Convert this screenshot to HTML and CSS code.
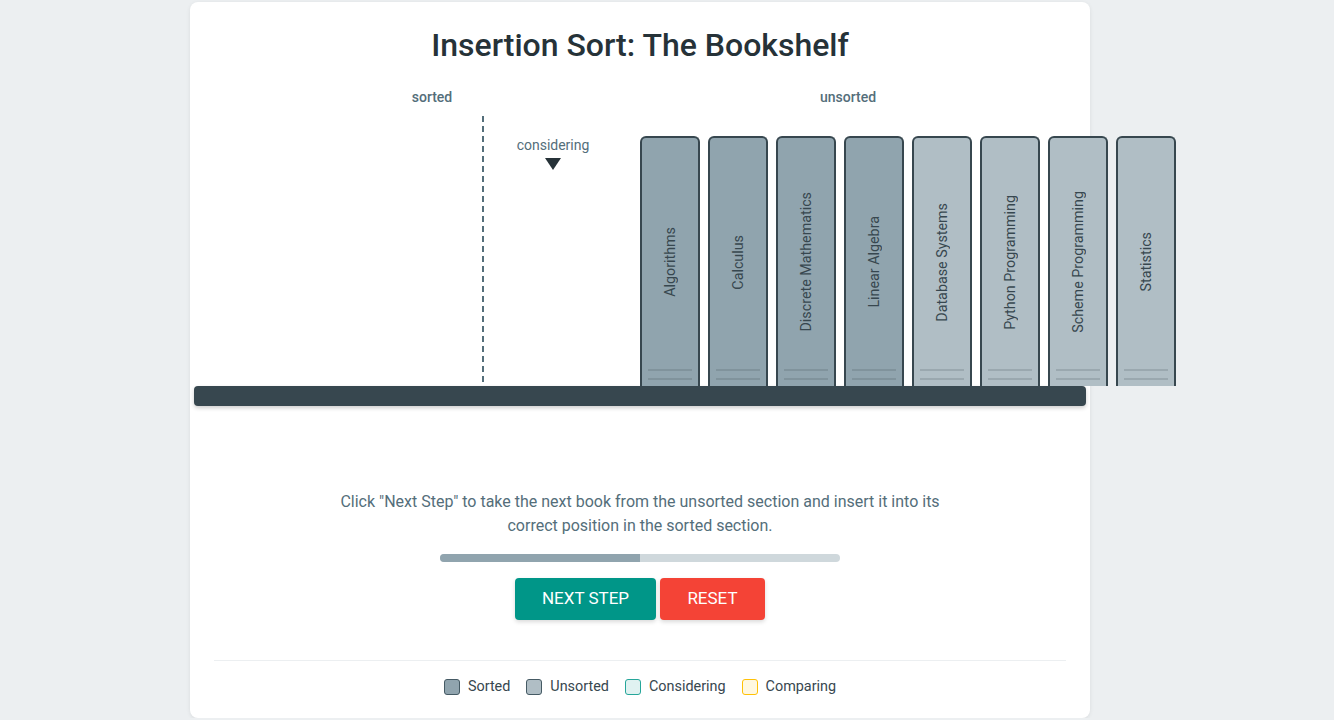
FILE: index.html
```html
<!DOCTYPE html>
<html lang="en">
<head>
<meta charset="utf-8">
<title>Insertion Sort: The Bookshelf</title>
<link rel="stylesheet" href="styles.css">
</head>
<body>
<div class="page">
  <main class="card">
    <h1 class="title">Insertion Sort: The Bookshelf</h1>
    <div class="stage">
      <div class="labels">
        <span class="label label-sorted">sorted</span>
        <span class="label label-unsorted">unsorted</span>
      </div>
      <div class="shelf-row">
        <div class="divider-line"></div>
        <div class="considering">
          <span class="considering-text">considering</span>
          <span class="arrow"></span>
        </div>
        <div class="books">
          <div class="book dark"><span>Algorithms</span></div>
          <div class="book dark"><span>Calculus</span></div>
          <div class="book dark"><span>Discrete Mathematics</span></div>
          <div class="book dark"><span>Linear Algebra</span></div>
          <div class="book light"><span>Database Systems</span></div>
          <div class="book light"><span>Python Programming</span></div>
          <div class="book light"><span>Scheme Programming</span></div>
          <div class="book light"><span>Statistics</span></div>
        </div>
      </div>
      <div class="shelf"></div>
    </div>
    <p class="instructions">Click "Next Step" to take the next book from the unsorted section and insert it into its correct position in the sorted section.</p>
    <div class="progress"><div class="progress-fill" style="width:50%"></div></div>
    <div class="buttons">
      <button class="btn btn-next">NEXT STEP</button>
      <button class="btn btn-reset">RESET</button>
    </div>
    <div class="legend">
      <div class="legend-item"><span class="swatch sw-sorted"></span>Sorted</div>
      <div class="legend-item"><span class="swatch sw-unsorted"></span>Unsorted</div>
      <div class="legend-item"><span class="swatch sw-considering"></span>Considering</div>
      <div class="legend-item"><span class="swatch sw-comparing"></span>Comparing</div>
    </div>
  </main>
</div>
</body>
</html>
```

FILE: styles.css
```css
* { box-sizing: border-box; }
html, body { margin: 0; padding: 0; }
body {
  background: #eceff1;
  font-family: Roboto, "Liberation Sans", sans-serif;
  color: #37474f;
  overflow: hidden;
}
.page {
  padding: 2px 0 0 190px;
}
.card {
  width: 900px;
  height: 716px;
  background: #fff;
  border-radius: 8px;
  box-shadow: 0 1px 4px rgba(0,0,0,0.08);
  padding: 24px 24px 0;
}
.title {
  margin: 0;
  text-align: center;
  font-size: 32px;
  line-height: 38px;
  font-weight: 500;
  color: #263238;
}
.stage {
  margin: 24px -20px 0;
}
.labels {
  display: flex;
  height: 18px;
  margin-bottom: 10px;
}
.label {
  flex: none;
  width: 120px;
  text-align: center;
  font-size: 14px;
  line-height: 18px;
  font-weight: 500;
  color: #546e7a;
}
.label-sorted { margin-left: 178px; }
.label-unsorted { margin-left: 296px; }
.shelf-row {
  display: flex;
  align-items: flex-end;
  height: 270px;
  padding-left: 288px;
}
.shelf-row > * { flex: none; }
.divider-line {
  align-self: flex-start;
  width: 0;
  height: 266px;
  border-left: 2px dashed #546e7a;
}
.considering {
  align-self: flex-start;
  width: 138px;
  margin-right: 18px;
  padding-top: 21px;
  display: flex;
  flex-direction: column;
  align-items: center;
}
.considering-text {
  font-size: 14px;
  line-height: 16px;
  color: #546e7a;
}
.arrow {
  margin-top: 5px;
  width: 0;
  height: 0;
  border-left: 8px solid transparent;
  border-right: 8px solid transparent;
  border-top: 12px solid #263238;
}
.books {
  display: flex;
  gap: 8px;
}
.book {
  flex: none;
  position: relative;
  width: 60px;
  height: 250px;
  border: 2px solid #37474f;
  border-bottom: none;
  border-radius: 6px 6px 0 0;
  display: flex;
  align-items: center;
  justify-content: center;
}
.book.dark { background: #90a4ae; }
.book.light { background: #b0bec5; }
.book span {
  writing-mode: vertical-rl;
  transform: rotate(180deg);
  font-size: 14.3px;
  color: #37474f;
  white-space: nowrap;
}
.book::after {
  content: "";
  position: absolute;
  left: 6px;
  right: 6px;
  bottom: 6px;
  height: 7px;
  border-top: 2px solid rgba(55,71,79,0.18);
  border-bottom: 2px solid rgba(55,71,79,0.18);
}
.shelf {
  height: 20px;
  background: #37474f;
  border-radius: 4px;
  box-shadow: 0 2px 4px rgba(0,0,0,0.2);
}
.instructions {
  width: 600px;
  margin: 84px auto 0;
  text-align: center;
  font-size: 16px;
  line-height: 24px;
  color: #546e7a;
}
.progress {
  width: 400px;
  height: 8px;
  margin: 16px auto 0;
  background: #cfd8dc;
  border-radius: 4px;
  overflow: hidden;
}
.progress-fill {
  height: 100%;
  background: #90a4ae;
}
.buttons {
  display: flex;
  justify-content: center;
  gap: 4px;
  margin-top: 16px;
}
.btn {
  height: 42px;
  border: none;
  border-radius: 4px;
  color: #fff;
  font-family: Roboto, "Liberation Sans", sans-serif;
  font-size: 17px;
  line-height: 20px;
  padding: 0 0 2px;
  box-shadow: 0 2px 4px rgba(0,0,0,0.15);
}
.btn-next { background: #009688; width: 141px; }
.btn-reset { background: #f44336; width: 105px; }
.legend {
  margin-top: 40px;
  border-top: 1px solid #eceff1;
  padding-top: 16px;
  display: flex;
  justify-content: center;
  gap: 16px;
}
.legend-item {
  display: flex;
  align-items: center;
  gap: 8px;
  font-size: 14.4px;
  line-height: 20px;
  color: #37474f;
}
.swatch {
  width: 16px;
  height: 16px;
  border-radius: 3px;
  border: 1.5px solid #455a64;
}
.sw-sorted { background: #90a4ae; }
.sw-unsorted { background: #b0bec5; }
.sw-considering { background: #e0f2f1; border-color: #26a69a; }
.sw-comparing { background: #fff8e1; border-color: #ffc107; }
```
